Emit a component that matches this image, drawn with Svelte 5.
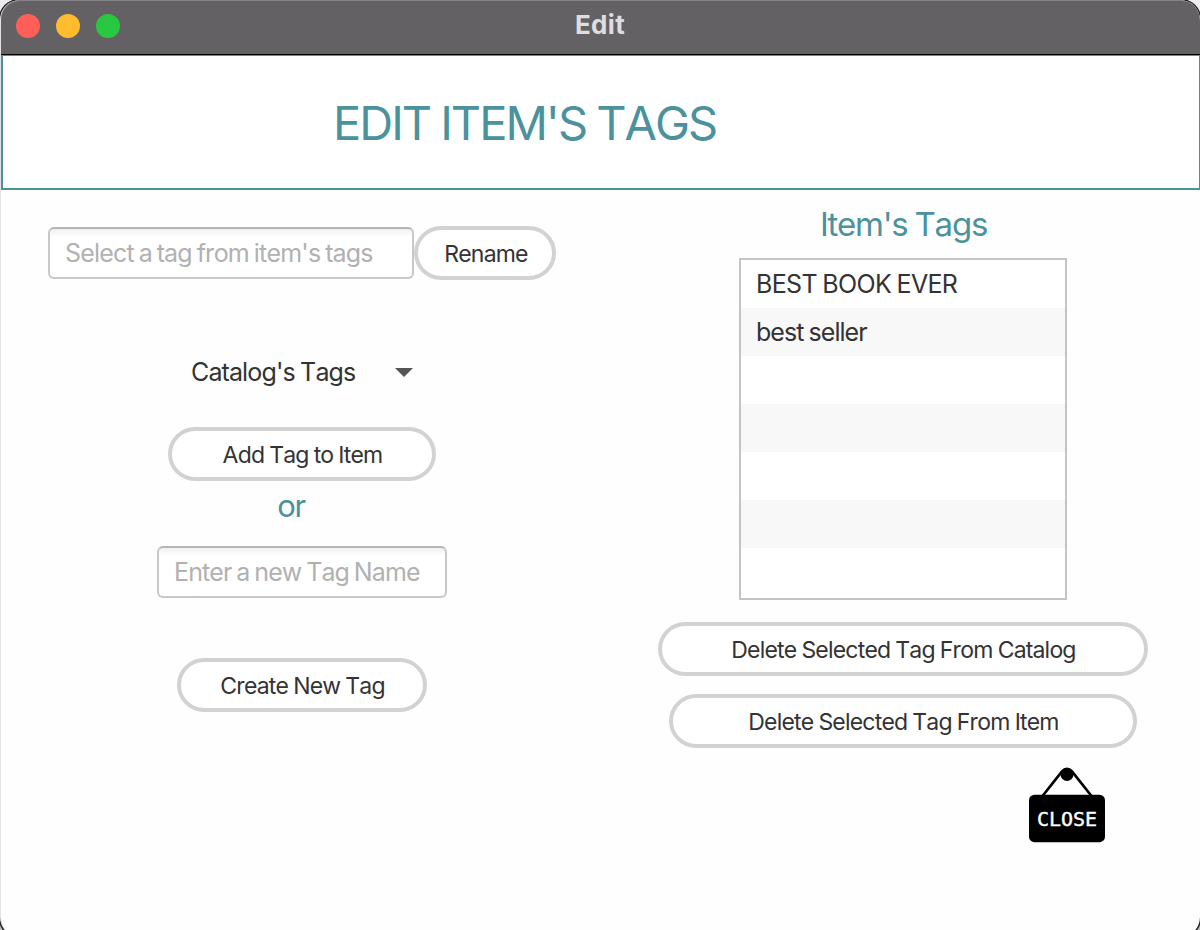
<script>
  let renameText = $state('');
  let newTag = $state('');
  const tags = ['BEST BOOK EVER', 'best seller', '', '', '', '', ''];
</script>

<div class="screen">
<div class="window">
  <div class="titlebar">
    <div class="lights"><i class="red"></i><i class="amber"></i><i class="green"></i></div>
    <span class="caption">Edit</span>
  </div>
  <header><h1>EDIT ITEM'S TAGS</h1></header>
  <main>
    <section class="left">
      <div class="rename-row">
        <input class="field select" bind:value={renameText} placeholder="Select a tag from item's tags" />
        <button class="pill rename"><span>Rename</span></button>
      </div>
      <div class="form">
        <div class="dropdown">
          <span>Catalog's Tags</span>
          <svg width="18" height="9" viewBox="0 0 18 9"><path d="M0 0H18L9 9Z" fill="#555" /></svg>
        </div>
        <button class="pill add"><span>Add Tag to Item</span></button>
        <div class="or">or</div>
        <input class="field new" bind:value={newTag} placeholder="Enter a new Tag Name" />
        <button class="pill create"><span>Create New Tag</span></button>
      </div>
    </section>
    <section class="right">
      <h2>Item's Tags</h2>
      <ul>
        {#each tags as tag, i}
          <li class:caps={i === 0}>{tag}</li>
        {/each}
      </ul>
      <button class="pill catalog"><span>Delete Selected Tag From Catalog</span></button>
      <button class="pill item"><span>Delete Selected Tag From Item</span></button>
      <button class="close" aria-label="Close">
        <svg width="76" height="76" viewBox="0 0 76 76">
          <path d="M13.500 29 33 4.500Q38 -1 43 4.500L62.500 29" stroke="#000" stroke-width="2.700" fill="none" />
          <circle cx="38" cy="7.400" r="6.500" />
          <rect y="27.700" width="76" height="47.500" rx="5.500" />
          <text x="8" y="59" textLength="60">CLOSE</text>
        </svg>
      </button>
    </section>
  </main>
</div>
</div>

<style>
  :global(body) { margin: 0; }
  * { box-sizing: border-box; }
  .screen { width: 1200px; height: 930px; overflow: hidden; background: linear-gradient(#ececec 50%, #b9b9b9 50%); }
  .window {
    width: 1200px; height: 937px; overflow: hidden; background: #fefefe;
    border-radius: 20px;
    border-left: 1px solid #e2e2e2;
    box-shadow: 0 0 0 1.5px #222;
    font-family: Inter, "Liberation Sans", sans-serif; color: #333;
    white-space: nowrap; font-kerning: none;
    display: flex; flex-direction: column;
  }
  .titlebar {
    height: 55px; margin-left: -1px; background: #646164; border-bottom: 1px solid #000;
    display: grid; grid-template-columns: 1fr auto 1fr; align-items: center;
    border-radius: 20px 20px 0 0; box-shadow: inset 1px 1px 0 #858385;
    padding-bottom: 3px;
  }
  .lights { display: flex; gap: 16px; padding-left: 16px; }
  .lights i { width: 24px; height: 24px; border-radius: 50%; }
  .red { background: #ff5f57; }
  .amber { background: #febc2e; }
  .green { background: #28c840; }
  .caption { font-size: 26px; font-weight: 700; color: #dfdde0; letter-spacing: 0.3px; line-height: 30px; padding-bottom: 2px; }
  header {
    height: 135px; border: solid #4b929d; border-width: 1px 1px 2px 2px; background: #fff;
    padding-left: 330px; display: flex; align-items: center;
  }
  h1, h2 { margin: 0; font-weight: 400; color: #4b929d; }
  h1 { font-size: 47px; line-height: 60px; letter-spacing: -2.02px; word-spacing: -1px; padding-top: 2px; }
  main { flex: 1; display: grid; grid-template-columns: 602px 1fr; }
  .left { padding: 36px 0 0 47px; }
  .rename-row { display: flex; align-items: center; height: 54px; }
  .field {
    height: 52px; border: 2px solid #c8c8c8; border-top-color: #b5b5b5; border-radius: 6px;
    padding: 0 0 0 15px; background: linear-gradient(#f0f0f0, #fff 8px);
    font: 25px Inter, sans-serif; font-kerning: none; letter-spacing: -0.9px; word-spacing: -1.3px; color: #333; outline: 0;
  }
  .field::placeholder { color: #b1b1b1; opacity: 1; }
  .select { width: 366px; letter-spacing: -0.83px; }
  .pill {
    height: 54px; border: 4px solid #d2d2d2; border-radius: 27px; background: #fff;
    font: 23px/28px Inter, sans-serif; font-kerning: none; color: #333; letter-spacing: -0.8px; word-spacing: -0.7px; padding: 2px 0 0 1px;
    white-space: nowrap;
  }
  .rename { width: 142px; padding-left: 2px; }
  .form { width: 508px; display: flex; flex-direction: column; align-items: center; }
  .dropdown {
    width: 222px; height: 40px; margin-top: 72px; font-size: 25px; letter-spacing: -0.85px; word-spacing: -1px;
    display: flex; align-items: center; justify-content: space-between;
  }
  .add { width: 268px; margin-top: 35px; }
  .or { color: #4b929d; font-size: 31px; line-height: 40px; letter-spacing: -1.3px; margin: 5px 22px 20px 0; }
  .new { width: 290px; }
  .create { width: 250px; margin-top: 60px; }
  .right { padding-top: 14px; width: 600px; display: flex; flex-direction: column; align-items: center; }
  h2 { font-size: 33px; line-height: 40px; letter-spacing: -1.25px; word-spacing: -1px; padding-left: 1px; }
  ul {
    list-style: none; margin: 14px 0 0; padding: 0; width: 328px; height: 342px; overflow: hidden;
    border: 2px solid #c4c4c4; background: #fff;
  }
  li { height: 48px; padding-left: 15px; font-size: 25px; line-height: 49px; letter-spacing: -0.95px; word-spacing: -1px; }
  li.caps { letter-spacing: -0.65px; }
  li:nth-child(even) { background: #f8f8f8; }
  .catalog { width: 490px; margin-top: 22px; }
  .item { width: 468px; margin-top: 18px; }
  .close { border: 0; padding: 0; background: none; margin: 19px 0 0 328px; height: 76px; }
  .close svg { display: block; }
  .close text { font: 20px "DejaVu Sans Mono", monospace; fill: #fff; stroke: #fff; stroke-width: 0.4px; }
</style>
